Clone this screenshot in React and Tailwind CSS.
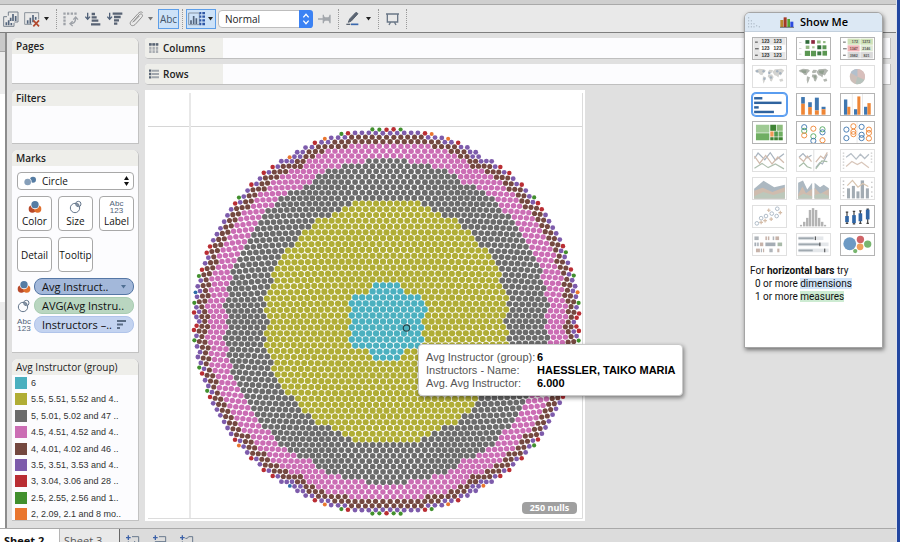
import React from "react";

/* ---------- bubble packing (front chain) ---------- */

const RINGS = [
  { color: "#4bb0bf", r: 3.47, end: 3.47, until: 40 },
  { color: "#b0ad35", r: 3.46, end: 3.33, until: 122 },
  { color: "#6b6b6b", r: 3.24, end: 3.1, until: 162 },
  { color: "#cb6db4", r: 3.05, end: 2.94, until: 180 },
  { color: "#744840", r: 2.87, end: 2.78, until: 188.5 },
];
const OUTER = [
  { color: "#7d5bab", r: 2.65, count: 165 },
  { color: "#b92d33", r: 2.5, count: 44 },
  { color: "#418f2d", r: 2.3, count: 24 },
  { color: "#e9762f", r: 2.2, count: 9 },
  { color: "#2f6ca8", r: 2.1, count: 2 },
];

function place(b, a, c) {
  const dx = b.x - a.x;
  const dy = b.y - a.y;
  const d2 = dx * dx + dy * dy;
  const a2 = (a.r + c.r) ** 2;
  const b2 = (b.r + c.r) ** 2;
  if (a2 > b2) {
    const x = (d2 + b2 - a2) / (2 * d2);
    const y = Math.sqrt(Math.max(0, b2 / d2 - x * x));
    c.x = b.x - x * dx - y * dy;
    c.y = b.y - x * dy + y * dx;
  } else {
    const x = (d2 + a2 - b2) / (2 * d2);
    const y = Math.sqrt(Math.max(0, a2 / d2 - x * x));
    c.x = a.x + x * dx - y * dy;
    c.y = a.y + x * dy + y * dx;
  }
}

function intersects(a, b) {
  const dr = a.r + b.r - 1e-6;
  return dr > 0 && dr * dr > (b.x - a.x) ** 2 + (b.y - a.y) ** 2;
}

function score(node) {
  const a = node.c;
  const b = node.next.c;
  const ab = a.r + b.r;
  const dx = (a.x * b.r + b.x * a.r) / ab;
  const dy = (a.y * b.r + b.y * a.r) / ab;
  return dx * dx + dy * dy;
}

function packBubbles() {
  const { r, color } = RINGS[0];
  const out = [
    { x: -r, y: 0, r, color },
    { x: r, y: 0, r, color },
    { x: 0, y: 0, r, color },
  ];
  place(out[1], out[0], out[2]);
  let a = { c: out[0] };
  let b = { c: out[1] };
  let n = { c: out[2] };
  a.next = n.prev = b;
  b.next = a.prev = n;
  n.next = b.prev = a;

  const add = (radius, fill) => {
    for (;;) {
      const circle = { x: 0, y: 0, r: radius, color: fill };
      place(a.c, b.c, circle);
      const node = { c: circle };
      let j = b.next;
      let k = a.prev;
      let sj = b.c.r;
      let sk = a.c.r;
      let hit = false;
      do {
        if (sj <= sk) {
          if (intersects(j.c, circle)) {
            b = j;
            hit = true;
            break;
          }
          sj += j.c.r;
          j = j.next;
        } else {
          if (intersects(k.c, circle)) {
            a = k;
            hit = true;
            break;
          }
          sk += k.c.r;
          k = k.prev;
        }
      } while (j !== k.next);
      if (hit) {
        a.next = b;
        b.prev = a;
        continue;
      }
      node.prev = a;
      node.next = b;
      a.next = b.prev = node;
      b = node;
      let best = score(a);
      let cur = b.next;
      const stop = b;
      while (cur !== stop) {
        const s = score(cur);
        if (s < best) {
          a = cur;
          best = s;
        }
        cur = cur.next;
      }
      b = a.next;
      out.push(circle);
      return Math.hypot(circle.x, circle.y);
    }
  };

  let from = 0;
  for (const ring of RINGS) {
    let dist = from;
    for (let i = 0; i < 2000 && dist <= ring.until; i++) {
      const t = Math.min(1, Math.max(0, (dist - from) / (ring.until - from)));
      dist = add(ring.r + (ring.end - ring.r) * t, ring.color);
    }
    from = ring.until;
  }
  for (const group of OUTER) {
    for (let i = 0; i < group.count; i++) add(group.r, group.color);
  }
  return out;
}

const BUBBLES = packBubbles();

function BubbleChart() {
  return (
    <svg width="440" height="431" viewBox="0 0 440 431" role="img" aria-label="Instructor ratings" className="block">
      <path d="M3 36.500H437" stroke="#d6d6d6" />
      <path d="M45 3V428" stroke="#e8e8e8" strokeWidth="2" />
      <path d="M3 428.500H437.500V3" stroke="#dcdcdc" fill="none" />
      <g transform="translate(241.500 231.500)">
        {BUBBLES.map((c, i) => (
          <circle key={i} cx={c.x.toFixed(2)} cy={c.y.toFixed(2)} r={(c.r * 0.91).toFixed(2)} fill={c.color} />
        ))}
      </g>
      <circle cx="261.500" cy="238" r="3.200" fill="#4bb0bf" stroke="#26444a" strokeWidth="1.200" />
    </svg>
  );
}

/* ---------- small icons ---------- */

const ColorIcon = () => (
  <svg width="14" height="14" viewBox="0 0 42 42" aria-hidden="true">
    <circle cx="13" cy="27" r="11" fill="#b8492a" />
    <circle cx="29" cy="27" r="11" fill="#e0702e" />
    <circle cx="21" cy="15" r="13" fill="#fff" />
    <circle cx="21" cy="14" r="11" fill="#557ca3" />
  </svg>
);

const SizeIcon = () => (
  <svg width="14" height="14" viewBox="0 0 42 42" fill="none" stroke="#66778c" strokeWidth="3" aria-hidden="true">
    <circle cx="18" cy="24" r="14" />
    <circle cx="28" cy="12" r="8" />
    <circle cx="26" cy="14" r="3" />
  </svg>
);

const LabelIcon = () => (
  <span className="flex h-[14px] w-[14px] flex-col items-center justify-center font-['Liberation_Sans',Arial,sans-serif] text-[8px] leading-[7px] text-[#4f6277]">
    <span>Abc</span>
    <span>123</span>
  </span>
);

const Caret = ({ className = "text-[#222]" }) => (
  <svg width="5" height="4" viewBox="0 0 5 4" className={className} aria-hidden="true">
    <path d="M0 0h5L2.500 3.500z" fill="currentColor" />
  </svg>
);

const Sep = () => <div className="h-[20px] w-px border-l border-dotted border-[#999]" />;

function IconButton({ label, w = 16, children }) {
  return (
    <button type="button" aria-label={label} className="block shrink-0">
      <svg width={w} height="16" viewBox={`0 0 ${w * 3} 48`} aria-hidden="true">
        {children}
      </svg>
    </button>
  );
}

function Toolbar() {
  return (
    <header className="flex h-[28px] shrink-0 items-center border-b border-[#7e7e7e] bg-[#e9e9e9] pl-[3px]">
      <IconButton label="Duplicate sheet">
        <path d="M16 14V3H45V33H34" fill="none" stroke="#76808c" strokeWidth="3" />
        <path d="M2 17H12M2 17V46H33V36" fill="none" stroke="#76808c" strokeWidth="3" />
        <path d="M23 30V20M30 30V9M38 30V15M10 43V34M17 43V28M25 43V36" stroke="#53647c" strokeWidth="5" />
      </IconButton>
      <div className="ml-[5px] flex items-center gap-1">
        <IconButton label="Clear sheet">
          <path d="M2 40V5H44V25" fill="none" stroke="#8a929b" strokeWidth="3" />
          <path d="M2 40H24" stroke="#8a929b" strokeWidth="3" />
          <path d="M11 38V28M19 38V20M27 34V12M35 26V18" stroke="#53647c" strokeWidth="5" />
          <path d="M28 28L45 46M45 28L28 46" stroke="#b2492e" strokeWidth="5" />
        </IconButton>
        <Caret />
      </div>
      <div className="ml-[7px] flex items-center gap-[6px]">
        <Sep />
        <IconButton label="Swap rows and columns">
          <path d="M1 8H8M12 8H19M23 8H30M34 8H41M1 19H8M1 29H8M1 39H8" fill="none" stroke="#9ea2a8" strokeWidth="7" />
          <path d="M22 38C34 38 38 32 38 20M31 26L38 18L45 26M29 31L21 38L29 45" fill="none" stroke="#9ea2a8" strokeWidth="4" />
        </IconButton>
        <IconButton label="Sort ascending">
          <path d="M8 5V25M1 17L8 25L15 17" fill="none" stroke="#4f6078" strokeWidth="4" />
          <path d="M20 9H30M20 19H35M20 29H40M18 40H46" stroke="#586374" strokeWidth="7" />
        </IconButton>
        <IconButton label="Sort descending">
          <path d="M8 5V25M1 17L8 25L15 17" fill="none" stroke="#4f6078" strokeWidth="4" />
          <path d="M17 8H46M21 18H41M21 28H36M21 38H31" stroke="#586374" strokeWidth="7" />
        </IconButton>
        <IconButton label="Group members" w={15}>
          <path d="M11 34L31 11C38 5 44 13 38 19L18 41C8 49 -1 39 6 31L27 8C31 3 37 1 41 5" fill="none" stroke="#8f8f8f" strokeWidth="3" />
          <path d="M13 33L31 15" stroke="#8f8f8f" strokeWidth="3" />
        </IconButton>
      </div>
      <div className="ml-1 flex items-center gap-[5px]">
        <Caret className="text-[#777]" />
        <button type="button" className="h-[20px] w-[21px] shrink-0 border border-[#5d9ee8] bg-[#cde2f8] text-[10px] leading-[18px] text-[#44546a]">
          Abc
        </button>
      </div>
      <div className="ml-[3px] flex items-center gap-[3px]">
        <Sep />
        <button type="button" aria-label="Show or hide cards" className="flex h-[20px] w-[30px] shrink-0 items-center gap-[3px] border border-[#5d9ee8] bg-[#cde2f8] pl-px">
          <svg width="17" height="14" viewBox="0 0 51 42" aria-hidden="true">
            <path d="M2 3H34V38H2Z" fill="none" stroke="#8794a3" strokeWidth="3" />
            <path d="M9 36V25M17 36V12M25 36V19" stroke="#53647c" strokeWidth="5" />
            <path d="M43 3H51M43 14H51M43 25H51M43 36H51M34 3H40M34 14H40M34 25H40M34 36H40" stroke="#2f57a6" strokeWidth="7" />
          </svg>
          <Caret />
        </button>
      </div>
      <div className="relative ml-[2px]">
        <select aria-label="Fit" className="block h-[18px] w-[95px] appearance-none rounded border border-[#bdbdbd] bg-white pl-[6px] text-[10px] leading-4 text-[#222]">
          <option>Normal</option>
        </select>
        <svg width="14" height="18" viewBox="0 0 42 54" className="pointer-events-none absolute top-0 right-0" aria-hidden="true">
          <path d="M0 0H32Q42 0 42 10V44Q42 54 32 54H0Z" fill="#3b82f4" />
          <path d="M13 22L21 13L29 22M13 32L21 41L29 32" fill="none" stroke="#fff" strokeWidth="4" />
        </svg>
      </div>
      <div className="ml-[5px] flex items-center gap-[7px]">
        <IconButton label="Fix axes" w={13}>
          <path d="M0 24H14M16 11V37M36 11V37" stroke="#a3a7ac" strokeWidth="4" />
          <path d="M16 14L22 19H31L36 13V35L31 29H22L16 34Z" fill="#a3a7ac" />
        </IconButton>
        <Sep />
        <IconButton label="Highlight" w={13}>
          <path d="M36 8L16 30L7 34L11 24L30 4Z" fill="#5a6472" stroke="#5a6472" strokeWidth="3" />
          <path d="M1 40H13" stroke="#5a6472" strokeWidth="4" />
          <path d="M15 40H37" stroke="#3a68ad" strokeWidth="5" />
        </IconButton>
        <Caret />
        <Sep />
        <IconButton label="Presentation mode" w={13}>
          <path d="M0 9H39M4 9V33H35V9M14 33L9 42M25 33L30 42" fill="none" stroke="#6a7787" strokeWidth="4" />
        </IconButton>
        <Sep />
      </div>
    </header>
  );
}

/* ---------- left cards ---------- */

function Card({ title, className = "", children }) {
  return (
    <section className={`flex w-[127px] flex-col overflow-hidden rounded-t-md border-r border-b border-[#c2c2c2] bg-[#fcfcfe] ${className}`}>
      <h2 className="h-[16px] shrink-0 bg-[#eeeeea] pl-1 text-[10px] leading-4 font-semibold text-[#222]">{title}</h2>
      {children}
    </section>
  );
}

const MarkButton = ({ icon, children }) => (
  <button type="button" className="flex h-[35px] w-[35px] flex-col items-center justify-center rounded border border-[#a8a8a8] bg-white text-[10px] leading-[14px] text-[#111]">
    {icon}
    {children}
  </button>
);

const Pill = ({ icon, className, children, end }) => (
  <li className="flex items-center gap-[3px]">
    {icon}
    <button type="button" className={`flex h-[17px] min-w-0 flex-1 items-center justify-between rounded-lg border pr-[7px] pl-[7px] text-[11px] leading-[15px] whitespace-nowrap text-[#111] ${className}`}>
      <span>{children}</span>
      {end}
    </button>
  </li>
);

const LEGEND = [
  ["bg-[#4bb0bf]", "6"],
  ["bg-[#b0ad35]", "5.5, 5.51, 5.52 and 4.."],
  ["bg-[#6b6b6b]", "5, 5.01, 5.02 and 47 .."],
  ["bg-[#cb6db4]", "4.5, 4.51, 4.52 and 4.."],
  ["bg-[#744840]", "4, 4.01, 4.02 and 46 .."],
  ["bg-[#7d5bab]", "3.5, 3.51, 3.53 and 4.."],
  ["bg-[#b92d33]", "3, 3.04, 3.06 and 28 .."],
  ["bg-[#418f2d]", "2.5, 2.55, 2.56 and 1.."],
  ["bg-[#e9762f]", "2, 2.09, 2.1 and 8 mo.."],
];

function SideCards() {
  return (
    <aside className="flex shrink-0 flex-col gap-[6px]">
      <Card title="Pages" className="h-[46px]" />
      <Card title="Filters" className="h-[54px]" />
      <Card title="Marks" className="h-[203px]">
        <div className="flex flex-col gap-[6px] pt-[6px] pr-1 pl-[5px]">
          <div className="relative">
            <svg width="14" height="10" viewBox="0 0 42 30" className="pointer-events-none absolute top-[4px] left-[7px]" aria-hidden="true">
              <circle cx="27" cy="11" r="9" fill="#557ca3" />
              <circle cx="12" cy="18" r="11" fill="#fff" />
              <circle cx="11" cy="18" r="10" fill="#869fb9" />
            </svg>
            <select aria-label="Mark type" className="block h-[18px] w-full appearance-none rounded border border-[#a8a8a8] bg-white pl-6 text-[10px] leading-4 text-[#111]">
              <option>Circle</option>
            </select>
            <svg width="5" height="10" viewBox="0 0 5 10" className="pointer-events-none absolute top-[4px] right-[5px]" aria-hidden="true">
              <path d="M0 4L2.500 0L5 4ZM0 6L2.500 10L5 6Z" fill="#111" />
            </svg>
          </div>
          <div className="flex justify-between">
            <MarkButton icon={<ColorIcon />}>Color</MarkButton>
            <MarkButton icon={<SizeIcon />}>Size</MarkButton>
            <MarkButton icon={<LabelIcon />}>Label</MarkButton>
          </div>
          <div className="flex gap-[6px]">
            <MarkButton>Detail</MarkButton>
            <MarkButton>Tooltip</MarkButton>
          </div>
          <ul className="flex flex-col gap-[2px]">
            <Pill icon={<ColorIcon />} className="border-[#5577a5] bg-[#a3b8da]" end={<Caret className="text-[#4f6f93]" />}>
              Avg Instruct..
            </Pill>
            <Pill icon={<SizeIcon />} className="border-[#a9cdb3] bg-[#b9d6c0]">
              AVG(Avg Instru..
            </Pill>
            <Pill
              icon={<LabelIcon />}
              className="border-[#b0c4ea] bg-[#c3d3f0]"
              end={
                <svg width="9" height="9" viewBox="0 0 9 9" aria-hidden="true">
                  <path d="M0 1H9M0 4.500H6M0 8H3" stroke="#5a6c85" strokeWidth="2" />
                </svg>
              }
            >
              Instructors –..
            </Pill>
          </ul>
        </div>
      </Card>
      <Card title="Avg Instructor (group)" className="min-h-0 flex-1 [&>h2]:font-normal">
        <ul className="flex min-h-0 flex-1 flex-col justify-between pt-[2px] pl-[3px]">
          {LEGEND.map(([swatch, text]) => (
            <li key={text} className="flex items-center gap-1 font-['Liberation_Sans',Arial,sans-serif] text-[9px] leading-3 text-[#333]">
              <span className={`h-[12px] w-[12px] shrink-0 ${swatch}`} />
              <span className="whitespace-nowrap">{text}</span>
            </li>
          ))}
        </ul>
      </Card>
    </aside>
  );
}

/* ---------- shelves ---------- */

function Shelf({ title, children }) {
  return (
    <div className="flex h-[21px] shrink-0 overflow-hidden rounded-l border-r border-b border-[#bfbfbf] bg-[#fcfcfe]">
      <div className="flex w-[78px] items-center gap-1 bg-[#eeeeea] pl-1 text-[10px] font-semibold text-[#222]">
        <svg width="10" height="10" viewBox="0 0 30 30" aria-hidden="true">
          {children}
        </svg>
        {title}
      </div>
    </div>
  );
}

/* ---------- Show Me ---------- */

const digits = (x, y, t, fill = "#333", s = 16) => (
  <text x={x} y={y} fontSize={s} fontFamily="Liberation Sans" fontWeight="bold" fill={fill}>
    {t}
  </text>
);

const Continents = ({ fill, spots }) => (
  <>
    <path d="M5 14L18 9L35 11L41 16L33 23L29 30L22 29L16 22L7 20ZM31 34L41 37L37 49L33 58L30 46ZM47 20L52 12L64 13L60 22L50 24ZM48 28L61 28L66 36L60 51L55 49L52 39L47 36ZM62 20L70 11L92 9L101 15L95 22L90 31L84 29L82 38L75 32L69 30ZM84 44L95 41L98 49L88 52Z" fill={fill} />
    {spots}
  </>
);

const lines = (list) =>
  list.map(([d, c], i) => <path key={i} d={d} fill="none" stroke={c} strokeWidth="4" />);
const rects = (list) =>
  list.map(([x, y, w, h, c], i) => <rect key={i} x={x} y={y} width={w} height={h} fill={c} />);
const rings = (list) =>
  list.map(([x, y, c], i) => <circle key={i} cx={x} cy={y} r="8.500" fill="none" stroke={c} strokeWidth="3" />);

const B = "#3f77b0";
const O = "#ee8636";

const THUMBS = [
  ["Text table", true, <>
    {rects([[0, 0, 105, 69, "#e6e6e6"], [20, 22, 85, 24, "#fff"], [5, 12, 9, 3, "#333"], [5, 34, 12, 3, "#333"], [5, 55, 9, 3, "#333"]])}
    {[18, 40, 62].map((y) => <g key={y}>{digits(26, y, "123")}{digits(66, y, "123")}</g>)}
  </>],
  ["Heat map", true, <>
    {rects([[5, 14, 8, 2, "#bbb"], [5, 33, 8, 2, "#bbb"], [5, 52, 8, 2, "#bbb"], [26, 7, 13, 12, "#2f6b3a"], [45, 7, 12, 12, "#8c2740"], [64, 8, 12, 10, "#93b983"], [84, 10, 8, 7, "#93b983"], [27, 25, 12, 11, "#93b983"], [48, 27, 8, 7, "#aac99b"], [65, 24, 13, 13, "#2f6b3a"], [82, 24, 13, 13, "#5b9752"], [24, 42, 17, 17, "#5b9752"], [44, 42, 17, 18, "#5b9752"], [65, 44, 13, 13, "#3f7a45"], [82, 42, 15, 16, "#5b9752"]])}
  </>],
  ["Highlight table", true, <>
    {rects([[20, 2, 83, 20, "#cfe2b8"], [20, 24, 40, 20, "#f0b6b8"], [62, 24, 41, 20, "#dfe9d4"], [20, 46, 83, 21, "#dadada"], [60, 0, 2, 69, "#fff"], [5, 12, 9, 3, "#555"], [5, 34, 12, 3, "#555"], [5, 55, 9, 3, "#555"]])}
    {digits(34, 16, "172", "#555", 12)}{digits(68, 16, "1272", "#555", 12)}
    {digits(27, 39, "1347", "#744", 12)}{digits(68, 39, "2146", "#555", 12)}
    {digits(27, 61, "3982", "#555", 12)}{digits(72, 61, "821", "#555", 12)}
  </>],
  ["Symbol map", false, <Continents fill="#d3d3d0" spots={[[12, 17], [33, 17], [52, 23], [78, 17], [88, 24], [36, 42], [57, 38]].map(([x, y]) => <circle key={x} cx={x} cy={y} r="4" fill="#a5b2bf" />)} />],
  ["Filled map", false, <Continents fill="#b2b6b0" spots={<path d="M9 14L30 14L27 24L17 22ZM70 16L88 14L84 27L72 24ZM52 31L62 31L58 45Z" fill="#92a090" />} />],
  ["Pie chart", false, <>
    <circle cx="52" cy="35" r="25" fill="#cdbfb9" />
    <path d="M52 35L52 10A25 25 0 0 1 75 45Z" fill="#d8bfbc" />
    <path d="M52 35L75 45A25 25 0 0 1 46 59Z" fill="#b7c3bd" />
    <path d="M52 35L30 22A25 25 0 0 1 52 10Z" fill="#b3c0cd" />
  </>],
  ["Horizontal bars", true, rects([[2, 10, 27, 8, "#2f639f"], [2, 25, 90, 8, "#2f639f"], [2, 40, 15, 8, "#2f639f"], [2, 55, 65, 8, "#2f639f"]])],
  ["Stacked bars", true, rects([[12, 10, 12, 22, B], [12, 32, 12, 36, O], [35, 27, 12, 16, B], [35, 43, 12, 25, O], [57, 12, 13, 42, B], [57, 54, 13, 14, O], [79, 42, 13, 8, B], [79, 50, 13, 18, O]])],
  ["Side-by-side bars", true, rects([[34, 0, 2, 69, "#ddd"], [68, 0, 2, 69, "#ddd"], [8, 18, 11, 50, B], [19, 42, 10, 26, O], [41, 50, 11, 18, B], [52, 8, 10, 60, O], [74, 42, 11, 26, B], [85, 30, 11, 38, O]])],
  ["Treemap", true, rects([[8, 9, 44, 26, "#9fca94"], [8, 37, 44, 23, "#6fae62"], [55, 9, 19, 20, "#3f8434"], [76, 9, 20, 20, "#8ebd7d"], [55, 31, 11, 17, "#f09a56"], [68, 31, 12, 17, "#4f9a4d"], [82, 31, 14, 17, "#6fae62"], [55, 50, 11, 10, "#3f8434"], [68, 50, 12, 10, "#3f8434"], [82, 50, 14, 10, "#3f8434"]])],
  ["Circle views", true, rings([[22, 17, B], [22, 29, "#55a862"], [22, 44, O], [52, 22, O], [52, 47, "#55a862"], [52, 62, B], [82, 24, "#55a862"], [82, 34, B], [82, 60, O]])],
  ["Side-by-side circles", true, <>{rects([[50, 0, 2, 69, "#ddd"]])}{rings([[16, 25, B], [16, 53, B], [39, 14, O], [39, 32, O], [39, 40, O], [66, 16, B], [66, 42, B], [66, 53, B], [90, 25, O], [90, 36, O], [90, 54, O]])}</>],
  ["Continuous lines", false, lines([["M3 28L15 10L37 32L55 9L72 34L100 12", "#a9b4bf"], ["M3 20L20 44L40 18L61 46L80 23L100 42", "#d2bcae"], ["M3 60L28 44L48 58L72 46L100 62", "#b0c0b0"]])],
  ["Discrete lines", false, <>{rects([[52, 0, 3, 69, "#ddd"]])}{lines([["M5 24L18 12L31 26L46 17", "#a9b4bf"], ["M5 24L20 38L32 20L46 38", "#d2bcae"], ["M5 54L20 42L32 55L46 60", "#a8bda8"], ["M60 58L73 42L82 46L98 14", "#a9b4bf"], ["M60 40L76 20L86 28L98 8", "#d2bcae"], ["M60 62L80 36L98 38", "#a8bda8"]])}</>],
  ["Dual lines", false, lines([["M15 24L31 12L48 30L62 14L76 28L90 14", "#b6bec6"], ["M15 54L34 38L52 48L66 40L90 58", "#d8c6ba"], ["M4 10H9M4 20H9M4 30H9M4 40H9M4 50H9M4 60H9M96 10H101M96 20H101M96 30H101M96 40H101", "#ccc"]])],
  ["Continuous area", false, <><path d="M2 35L33 9L68 30L103 22V67H2Z" fill="#acb8c1" /><path d="M2 42L30 32L62 46L103 30V67H2Z" fill="#cfbcae" /><path d="M2 60L32 46L65 56L103 45V67H2Z" fill="#bcc8bb" /></>],
  ["Discrete area", false, <><path d="M2 16L18 8L32 38L48 16V67H2ZM56 16L74 30L86 22L103 34V67H56Z" fill="#acb8c1" /><path d="M2 54L16 28L28 50L48 35V67H2ZM56 32L75 52L103 36V67H56Z" fill="#cfbcae" /><path d="M2 60L20 52L48 60V67H2ZM56 56L80 50L103 58V67H56Z" fill="#bcc8bb" /></>],
  ["Dual combination", false, <>{rects([[18, 34, 10, 33, "#a3acb3"], [34, 26, 10, 41, "#a3acb3"], [49, 44, 10, 23, "#a3acb3"], [63, 8, 11, 59, "#a3acb3"], [80, 34, 10, 33, "#a3acb3"]])}{lines([["M19 25L36 8L54 30L70 18L88 28", "#d9c5af"], ["M4 10H9M4 22H9M4 34H9M4 46H9M4 58H9M97 14H102M97 30H102M97 46H102M97 60H102", "#bbb"]])}</>],
  ["Scatter plot", false, <>{[[11, 57], [25, 40], [41, 33], [60, 25], [76, 33], [78, 9]].map(([x, y]) => <circle key={x} cx={x} cy={y} r="6" fill="none" stroke="#a9b6c4" strokeWidth="3" />)}{lines([["M50 8V20M44 14H56M88 16V28M82 22H94M58 37V49M52 43H64M38 42V54M32 48H44M25 48V60M19 54H31", "#d5bda9"]])}</>],
  ["Histogram", false, rects([[8, 62, 7, 5, "#b3b3b3"], [18, 52, 8, 15, "#b3b3b3"], [28, 39, 8, 28, "#b3b3b3"], [37, 13, 8, 54, "#b3b3b3"], [47, 7, 8, 60, "#b3b3b3"], [57, 13, 8, 54, "#b3b3b3"], [67, 39, 8, 28, "#b3b3b3"], [77, 52, 8, 15, "#b3b3b3"], [87, 62, 7, 5, "#b3b3b3"]])],
  ["Box and whisker", true, <>{lines([["M18 20V57M41 18V60M62 16V58M86 8V58M14 20H22M37 18H45M58 16H66M82 10H90M14 57H22M37 59H45M58 57H66M82 57H90", "#444"]])}{rects([[12, 33, 12, 20, "#2f65a5"], [35, 30, 12, 26, "#2f65a5"], [56, 24, 12, 26, "#2f65a5"], [80, 12, 12, 32, "#2f65a5"]])}</>],
  ["Gantt", false, rects([[3, 8, 14, 12, "#b0b5ba"], [39, 8, 5, 12, "#c7b3aa"], [47, 8, 5, 12, "#c7b3aa"], [63, 8, 5, 12, "#b0b5ba"], [72, 8, 12, 12, "#c7b3aa"], [3, 28, 6, 12, "#a5adb5"], [12, 28, 5, 12, "#a5adb5"], [21, 28, 11, 12, "#c7b3aa"], [39, 28, 33, 12, "#a5adb5"], [79, 28, 15, 12, "#a9baa9"], [8, 48, 13, 12, "#c7b3aa"], [24, 48, 4, 12, "#b0b5ba"], [31, 48, 4, 12, "#c7b3aa"], [52, 48, 11, 12, "#b0b5ba"], [78, 48, 7, 12, "#c7b3aa"]])],
  ["Bullet graph", false, rects([[3, 8, 82, 12, "#e4e7ea"], [3, 28, 99, 12, "#e4e7ea"], [3, 48, 99, 12, "#e4e7ea"], [3, 11, 50, 6, "#a0a9b0"], [3, 31, 72, 6, "#a0a9b0"], [3, 51, 47, 6, "#a0a9b0"], [57, 8, 3, 12, "#333"], [72, 28, 3, 12, "#333"], [88, 48, 3, 12, "#333"]])],
  ["Packed bubbles", true, <><circle cx="27" cy="32" r="21" fill="#6d9ac4" /><circle cx="62" cy="18" r="12" fill="#cf6468" /><circle cx="61" cy="42" r="11" fill="#efa05c" /><circle cx="86" cy="33" r="12" fill="#77b56e" /><circle cx="45" cy="56" r="7" fill="#77b56e" /></>],
];

function ShowMe() {
  return (
    <section className="absolute top-[12px] right-[17px] flex h-[336px] w-[139px] flex-col overflow-hidden rounded-t-md border border-[#a5a5a5] bg-white shadow-[1px_2px_4px_rgba(0,0,0,0.5)]">
      <h2 className="flex h-[19px] shrink-0 items-center border-b border-[#c3d0dd] bg-[#dce8f4] pl-[3px] text-[11px] font-semibold text-black">
        <svg width="12" height="12" viewBox="0 0 36 36" aria-hidden="true">
          <path d="M2 4V34M10 13V34M18 22V34M26 28V34M34 31V34" stroke="#9aa6b3" strokeWidth="3" strokeDasharray="3 6" />
        </svg>
        <svg width="14" height="12" viewBox="0 0 42 36" className="ml-[20px]" aria-hidden="true">
          {rects([[1, 12, 9, 21, "#b98a2d"], [11, 4, 9, 29, "#a33a26"], [22, 9, 8, 24, "#55a32d"], [31, 17, 9, 16, "#2c4be0"]])}
          <path d="M0 34H42" stroke="#333" strokeWidth="2" />
        </svg>
        <span className="ml-[6px]">Show Me</span>
      </h2>
      <div className="grid grid-cols-3 gap-x-[9px] gap-y-[5px] px-[7px] pt-[5px]">
        {THUMBS.map(([label, enabled, art]) => (
          <button
            key={label}
            type="button"
            aria-label={label}
            className={`h-[23px] overflow-hidden border bg-white ${
              label === "Horizontal bars"
                ? "rounded-sm border-[#5a9df0] ring-1 ring-[#5a9df0]"
                : enabled
                  ? "border-[#b4b4b4]"
                  : "border-[#e0e0e0]"
            }`}
          >
            <svg viewBox="0 0 105 69" className="block h-full w-full" aria-hidden="true">
              {art}
            </svg>
          </button>
        ))}
      </div>
      <div className="pt-2 pl-[5px] font-[Roboto,sans-serif] text-[10px] leading-[13px] text-[#111]">
        <p>
          For <b className="font-bold">horizontal bars</b> try
        </p>
        <p className="pl-[5px]">
          0 or more <span className="bg-[#d2e5fa]">dimensions</span>
        </p>
        <p className="pl-[5px]">
          1 or more <span className="bg-[#cdebd2]">measures</span>
        </p>
      </div>
    </section>
  );
}

/* ---------- tooltip ---------- */

const TIP = [
  ["Avg Instructor (group):", "6"],
  ["Instructors - Name:", "HAESSLER, TAIKO MARIA"],
  ["Avg. Avg Instructor:", "6.000"],
];

const Tip = () => (
  <dl
    role="tooltip"
    className="absolute top-[254px] left-[273px] grid h-[52px] w-[265px] grid-cols-[111px_1fr] content-center rounded border border-[#c9c9c9] bg-white pl-[7px] font-['Liberation_Sans',Arial,sans-serif] text-[11px] leading-[13px] whitespace-nowrap shadow-[1px_2px_4px_rgba(0,0,0,0.45)]"
  >
    {TIP.map(([k, v]) => (
      <React.Fragment key={k}>
        <dt className="text-[#555]">{k}</dt>
        <dd className="font-bold text-black">{v}</dd>
      </React.Fragment>
    ))}
  </dl>
);

const NewTab = ({ label, children }) => (
  <button type="button" aria-label={label} className="block">
    <svg width="14" height="14" viewBox="0 0 42 42" aria-hidden="true">
      <path d="M7 1V15M0 8H14" stroke="#3d62a8" strokeWidth="4" />
      {children}
    </svg>
  </button>
);

export default function App() {
  return (
    <div className="relative flex h-screen overflow-hidden bg-[#e0e0e0] font-['Open_Sans','Noto_Sans',sans-serif]">
      <div className="flex min-w-0 flex-1 flex-col">
        <div className="h-[5px] shrink-0 border-b border-[#a9a9a9] bg-[#cfcfcf]" />
        <Toolbar />
        <div className="flex min-h-0 flex-1">
          <div className="flex w-[5px] shrink-0 flex-col bg-white">
            <div className="h-[19px] border-b border-[#a5a5a5] bg-[#c9c9c9]" />
            <div className="h-[42px] bg-[#ececec]" />
            <div className="mt-[208px] h-[18px] bg-[#ececec]" />
          </div>
          <main className="flex min-w-0 flex-1 gap-[6px] border-l-2 border-[#8c8c8c] pt-[5px] pr-[5px] pb-[7px] pl-[5px]">
            <SideCards />
            <div className="flex min-w-0 flex-1 flex-col gap-[5px]">
              <Shelf title="Columns">
                <path d="M4 0V30M14 0V30M24 0V30" stroke="#a9adb2" strokeWidth="7" strokeDasharray="9 2" />
                <path d="M0 4H28" stroke="#596575" strokeWidth="7" strokeDasharray="8 2" />
              </Shelf>
              <Shelf title="Rows">
                <path d="M9 5H30M9 15H30M9 25H30" stroke="#a0a6ad" strokeWidth="6" />
                <path d="M0 5H7M0 15H7M0 25H7" stroke="#596575" strokeWidth="7" />
              </Shelf>
              <div className="relative w-[440px] flex-1 bg-white">
                <BubbleChart />
                <button type="button" className="absolute right-2 bottom-[7px] h-[12px] w-[55px] rounded-sm bg-[#a0a0a0] text-[9px] leading-[12px] font-bold text-white">
                  250 nulls
                </button>
                <Tip />
              </div>
            </div>
          </main>
        </div>
        <footer className="flex h-[14px] shrink-0 items-start overflow-hidden border-t border-[#a9a9a9] bg-[#dcdcdc] text-[11px] leading-6 text-[#555]">
          <button type="button" className="w-[60px] border-r border-[#b5b5b5] bg-white pl-1 text-left font-bold text-[#111]">
            Sheet 2
          </button>
          <button type="button" className="w-[60px] border-r border-[#666] bg-[#e9e9e9] pl-1 text-left">
            Sheet 3
          </button>
          <div className="flex gap-[13px] pt-[6px] pl-[6px]">
            <NewTab label="New worksheet">
              <path d="M18 5H38V42M7 19V42M18 42V25M26 42V18M33 42V28" fill="none" stroke="#68788c" strokeWidth="3" />
            </NewTab>
            <NewTab label="New dashboard">
              <path d="M18 5H38V42M7 19V42M7 20H38M20 20V42" fill="none" stroke="#68788c" strokeWidth="3" />
            </NewTab>
            <NewTab label="New story">
              <path d="M16 10H22L26 5H38V42M7 19V42" fill="none" stroke="#68788c" strokeWidth="3" />
            </NewTab>
          </div>
        </footer>
      </div>
      <div className="w-[4px] shrink-0 border-l border-[#dfe3ec] bg-[#2347a0]" />
      <ShowMe />
    </div>
  );
}
